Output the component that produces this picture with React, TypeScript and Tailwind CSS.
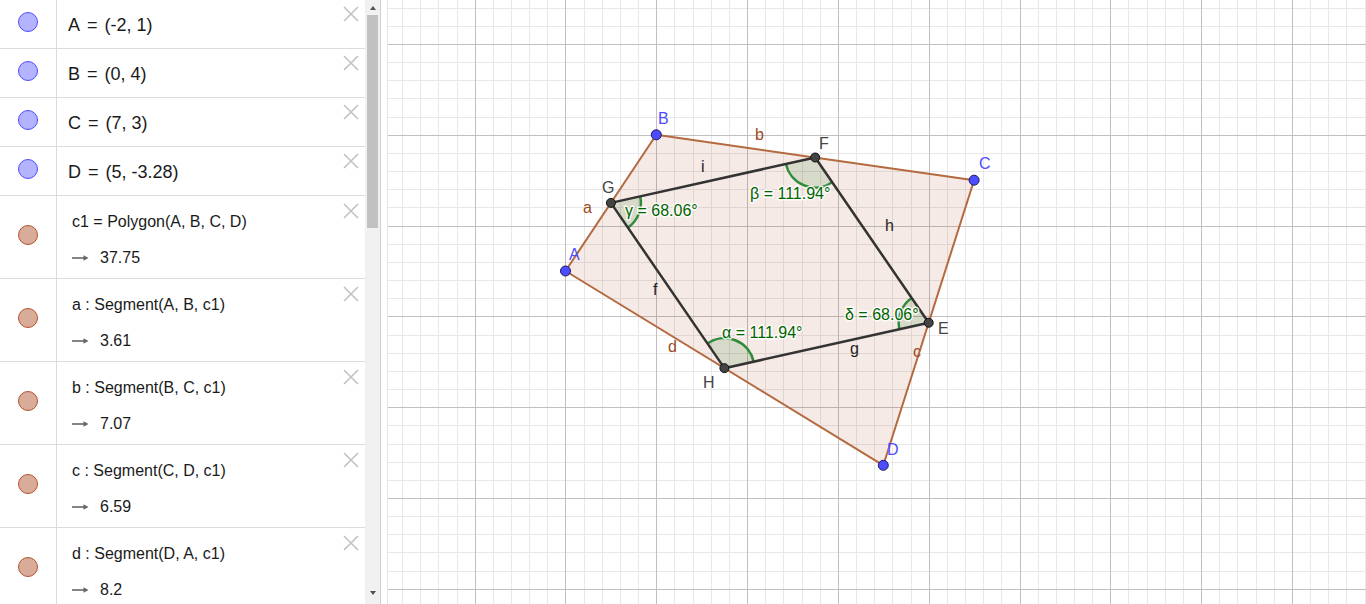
import React from "react";

const FONT = '"Liberation Sans", Arial, sans-serif';

// graphics view mapping (svg starts at screen x = 388)
const GX = 388;
const U = 45.4;
const OX = 656.3 - GX;
const OY = 316.4;
const W = 978;
const H = 604;

type Pt = [number, number];
const toPx = (x: number, y: number): Pt => [OX + x * U, OY - y * U];
const mid = (p: Pt, q: Pt): Pt => [(p[0] + q[0]) / 2, (p[1] + q[1]) / 2];

const A = toPx(-2, 1);
const B = toPx(0, 4);
const C = toPx(7, 3);
const D = toPx(5, -3.28);
const G = mid(A, B);
const F = mid(B, C);
const E = mid(C, D);
const Hh = mid(D, A);

function sector(p: Pt, q1: Pt, q2: Pt, r: number) {
  const n = (v: Pt): Pt => {
    const l = Math.hypot(v[0], v[1]);
    return [v[0] / l, v[1] / l];
  };
  const u1 = n([q1[0] - p[0], q1[1] - p[1]]);
  const u2 = n([q2[0] - p[0], q2[1] - p[1]]);
  const s: Pt = [p[0] + r * u1[0], p[1] + r * u1[1]];
  const e: Pt = [p[0] + r * u2[0], p[1] + r * u2[1]];
  const sweep = u1[0] * u2[1] - u1[1] * u2[0] > 0 ? 1 : 0;
  return {
    fill: `M${p[0]},${p[1]} L${s[0]},${s[1]} A${r},${r} 0 0 ${sweep} ${e[0]},${e[1]} Z`,
    arc: `M${s[0]},${s[1]} A${r},${r} 0 0 ${sweep} ${e[0]},${e[1]}`,
  };
}

function Grid() {
  const minor: React.ReactNode[] = [];
  const major: React.ReactNode[] = [];
  const step = 0.4 * U;
  for (let k = -40; k <= 60; k++) {
    const x = Math.round(OX + k * step) + 0.5;
    if (x < 0 || x > W) continue;
    const el = <line key={"v" + k} x1={x} y1={0} x2={x} y2={H} />;
    (k % 5 === 0 ? major : minor).push(el);
  }
  for (let k = -40; k <= 40; k++) {
    const y = Math.round(OY - k * step) + 0.5;
    if (y < 0 || y > H) continue;
    const el = <line key={"h" + k} x1={0} y1={y} x2={W} y2={y} />;
    (k % 5 === 0 ? major : minor).push(el);
  }
  return (
    <>
      <g stroke="#e8e8e8" strokeWidth={1}>{minor}</g>
      <g stroke="#c0c0c0" strokeWidth={1}>{major}</g>
    </>
  );
}

const labels: { t: string; x: number; y: number; c: string; halo?: boolean }[] = [
  { t: "A", x: 569, y: 260, c: "#4d4dff" },
  { t: "B", x: 658, y: 124, c: "#4d4dff" },
  { t: "C", x: 979, y: 169, c: "#4d4dff" },
  { t: "D", x: 887, y: 455, c: "#4d4dff" },
  { t: "G", x: 602, y: 193, c: "#444444" },
  { t: "F", x: 819, y: 149, c: "#444444" },
  { t: "E", x: 938, y: 334, c: "#444444" },
  { t: "H", x: 703, y: 388, c: "#444444" },
  { t: "a", x: 583, y: 213, c: "#9c4a22" },
  { t: "b", x: 755, y: 140, c: "#9c4a22" },
  { t: "c", x: 913, y: 357, c: "#9c4a22" },
  { t: "d", x: 668, y: 352, c: "#9c4a22" },
  { t: "i", x: 701, y: 172, c: "#222222" },
  { t: "h", x: 885, y: 231, c: "#222222" },
  { t: "f", x: 653, y: 295, c: "#222222" },
  { t: "g", x: 850, y: 354, c: "#222222" },
  { t: "γ = 68.06°", x: 625, y: 216, c: "#006400", halo: true },
  { t: "β = 111.94°", x: 750, y: 199, c: "#006400", halo: true },
  { t: "α = 111.94°", x: 722, y: 338, c: "#006400", halo: true },
  { t: "δ = 68.06°", x: 845, y: 320, c: "#006400", halo: true },
];

function Graphics() {
  const poly = [A, B, C, D].map((p) => p.join(",")).join(" ");
  const inner = [G, F, E, Hh].map((p) => p.join(",")).join(" ");
  const angles = [
    sector(G, F, Hh, 30),
    sector(F, G, E, 30),
    sector(E, F, Hh, 30),
    sector(Hh, E, G, 30),
  ];
  return (
    <svg width={W} height={H} className="block" style={{ fontFamily: FONT }}>
      <rect width={W} height={H} fill="#ffffff" />
      <Grid />
      <polygon points={poly} fill="rgba(153,51,0,0.1)" stroke="none" />
      {angles.map((a, i) => (
        <path key={"s" + i} d={a.fill} fill="rgba(0,100,0,0.12)" stroke="none" />
      ))}
      {angles.map((a, i) => (
        <path key={"a" + i} d={a.arc} fill="none" stroke="#2e8b3a" strokeWidth={2.5} />
      ))}
      <polygon points={poly} fill="none" stroke="#b4693f" strokeWidth={2} strokeLinejoin="round" />
      <polygon points={inner} fill="none" stroke="#333333" strokeWidth={2.5} strokeLinejoin="round" />
      {[G, F, E, Hh].map((p, i) => (
        <circle key={"ip" + i} cx={p[0]} cy={p[1]} r={4.5} fill="#444444" stroke="#111111" strokeWidth={1} />
      ))}
      {[A, B, C, D].map((p, i) => (
        <circle key={"op" + i} cx={p[0]} cy={p[1]} r={5} fill="#4d4dff" stroke="#1a1a66" strokeWidth={1} />
      ))}
      {labels.map((l, i) => (
        <text
          key={"l" + i}
          x={l.x - GX}
          y={l.y}
          fill={l.c}
          fontSize={16}
          stroke={l.halo ? "rgba(255,255,255,0.85)" : "none"}
          strokeWidth={l.halo ? 3 : 0}
          paintOrder="stroke"
          strokeLinejoin="round"
        >
          {l.t}
        </text>
      ))}
    </svg>
  );
}

function CloseX() {
  return (
    <svg width="16" height="16" viewBox="0 0 16 16" className="block">
      <path d="M1 1 L15 15 M15 1 L1 15" stroke="#c2c2c2" strokeWidth="1.6" fill="none" />
    </svg>
  );
}

function Arrow() {
  return (
    <svg width="17" height="8" viewBox="0 0 17 8" className="block">
      <line x1="0" y1="4" x2="13" y2="4" stroke="#666666" strokeWidth="1.6" />
      <path d="M11.5 1.2 L16.5 4 L11.5 6.8 Z" fill="#666666" />
    </svg>
  );
}

function Dot({ kind }: { kind: "point" | "poly" }) {
  return kind === "point" ? (
    <div className="w-[20px] h-[20px] rounded-full bg-[#b3b3ff] border border-[#4d4dff]" />
  ) : (
    <div className="w-[20px] h-[20px] rounded-full bg-[#d9ab99] border border-[#b4542c]" />
  );
}

function PointRow({ name, value }: { name: string; value: string }) {
  return (
    <div className="flex h-[49px] border-b border-[#dcdcdc] shrink-0">
      <div className="w-[57px] shrink-0 border-r border-[#dcdcdc] flex justify-center pt-[12px]">
        <Dot kind="point" />
      </div>
      <div className="relative flex-1 flex items-center pl-[11px] pt-[2px] text-[18px] text-[#1a1a1a]">
        <span>{name}</span>
        <span className="mx-[7px]">=</span>
        <span>{value}</span>
        <div className="absolute right-[6px] top-[6px]">
          <CloseX />
        </div>
      </div>
    </div>
  );
}

function DefRow({ def, value }: { def: string; value: string }) {
  return (
    <div className="flex h-[83px] border-b border-[#dcdcdc] shrink-0">
      <div className="w-[57px] shrink-0 border-r border-[#dcdcdc] flex justify-center pt-[29px]">
        <Dot kind="poly" />
      </div>
      <div className="relative flex-1 flex flex-col pl-[15px] pt-[14px] text-[16px] text-[#1a1a1a]">
        <div className="leading-[24px] whitespace-pre">{def}</div>
        <div className="leading-[24px] mt-[12px] flex items-center">
          <Arrow />
          <span className="ml-[11px]">{value}</span>
        </div>
        <div className="absolute right-[6px] top-[7px]">
          <CloseX />
        </div>
      </div>
    </div>
  );
}

export default function App() {
  return (
    <div className="flex w-[1366px] h-[604px] overflow-hidden bg-white" style={{ fontFamily: FONT }}>
      <div className="w-[365px] shrink-0 flex flex-col overflow-hidden">
        <PointRow name="A" value="(-2, 1)" />
        <PointRow name="B" value="(0, 4)" />
        <PointRow name="C" value="(7, 3)" />
        <PointRow name="D" value="(5, -3.28)" />
        <DefRow def="c1 = Polygon(A, B, C, D)" value="37.75" />
        <DefRow def="a : Segment(A, B, c1)" value="3.61" />
        <DefRow def="b : Segment(B, C, c1)" value="7.07" />
        <DefRow def="c : Segment(C, D, c1)" value="6.59" />
        <DefRow def="d : Segment(D, A, c1)" value="8.2" />
      </div>
      <div className="w-[15px] shrink-0 bg-[#f1f1f1] flex flex-col items-center">
        <div className="h-[15px] w-full flex items-center justify-center">
          <div className="w-0 h-0 border-l-[3.5px] border-r-[3.5px] border-b-[4px] border-l-transparent border-r-transparent border-b-[#505050]" />
        </div>
        <div className="w-[11px] h-[213px] bg-[#c1c1c1]" />
        <div className="flex-1" />
        <div className="h-[16px] mb-[3px] w-full flex items-center justify-center">
          <div className="w-0 h-0 border-l-[3.5px] border-r-[3.5px] border-t-[4px] border-l-transparent border-r-transparent border-t-[#505050]" />
        </div>
      </div>
      <div className="w-[8px] shrink-0 bg-white border-l border-r border-l-[#cfcfcf] border-r-[#e4e4e4]" />
      <div className="flex-1">
        <Graphics />
      </div>
    </div>
  );
}
